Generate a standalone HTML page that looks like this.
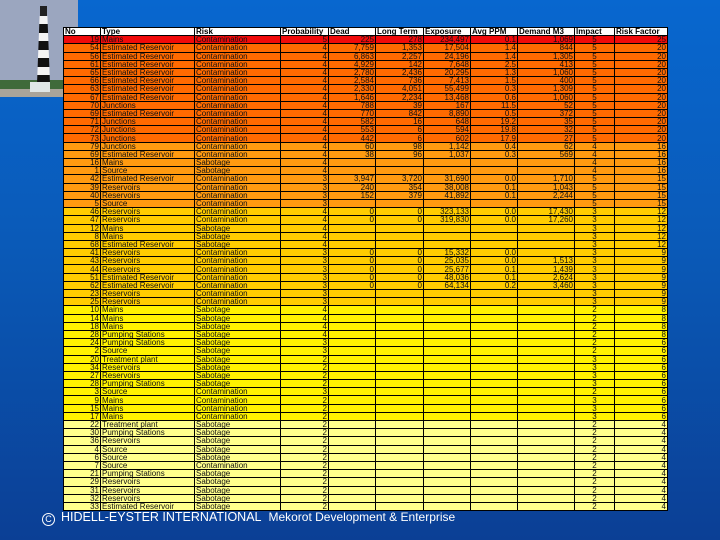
<!DOCTYPE html>
<html><head><meta charset="utf-8"><style>
html,body{margin:0;padding:0}
body{width:720px;height:540px;overflow:hidden;position:relative;background:linear-gradient(180deg,#0867cf 0%,#0a5ab8 45%,#0b3f95 100%);font-family:"Liberation Sans",sans-serif}
.sky{position:absolute;left:0;top:0;width:78px;height:97px;background:#9ba6bf}
.grass{position:absolute;left:0;top:80px;width:78px;height:9px;background:#3f6a3a}
.sand{position:absolute;left:0;top:89px;width:78px;height:8px;background:#a9a49a}
.lh{position:absolute;left:37px;top:16px;width:13px;height:68px;background:repeating-linear-gradient(180deg,#f4f4f4 0 8px,#111 8px 17px);clip-path:polygon(20% 0,80% 0,100% 100%,0 100%)}
.lhtop{position:absolute;left:40px;top:6px;width:7px;height:11px;background:#222}
.house{position:absolute;left:30px;top:82px;width:20px;height:10px;background:#dfe6e6}
table{position:absolute;left:63px;top:27px;width:604px;border-collapse:collapse;table-layout:fixed;font-size:8px;line-height:7px}
td{border:1px solid #000;padding:0 1px;height:7.2px;overflow:hidden;white-space:nowrap;color:#111}
tr.h td{background:#fff;font-weight:bold;color:#000}
tr.a td{background:#f00a0a}
tr.b td{background:#ff6a00}
tr.c td{background:#ff9a10}
tr.d td{background:#ffcc00}
tr.e td{background:#fff200}
tr.f td{background:#ffff8c}
td:nth-child(1),td:nth-child(4),td:nth-child(5),td:nth-child(6),td:nth-child(7),td:nth-child(8),td:nth-child(9),td:nth-child(10),td:nth-child(11){text-align:right}
tr.h td{text-align:left}
td:nth-child(10){text-align:center}
.foot{position:absolute;left:42px;top:510px;color:#fff;font-size:12.5px;white-space:nowrap}
.foot .c{display:inline-block;width:11px;height:11px;border:1px solid #fff;border-radius:50%;font-size:9px;text-align:center;line-height:11px;margin-right:6px;vertical-align:-1px}
</style></head><body>
<div class="sky"></div><div class="grass"></div><div class="sand"></div>
<div class="lhtop"></div><div class="lh"></div><div class="house"></div>
<table>
<colgroup><col style="width:37px"><col style="width:94px"><col style="width:86px"><col style="width:48px"><col style="width:47px"><col style="width:48px"><col style="width:47px"><col style="width:47px"><col style="width:57px"><col style="width:40px"><col style="width:53px"></colgroup>
<tr class="h"><td>No</td><td>Type</td><td>Risk</td><td>Probability</td><td>Dead</td><td>Long Term</td><td>Exposure</td><td>Avg PPM</td><td>Demand M3</td><td>Impact</td><td>Risk Factor</td></tr>
<tr class="a"><td>19</td><td>Mains</td><td>Contamination</td><td>5</td><td>225</td><td>278</td><td>234,497</td><td>0.1</td><td>1,069</td><td>5</td><td>25</td></tr>
<tr class="b"><td>54</td><td>Estimated Reservoir</td><td>Contamination</td><td>4</td><td>7,759</td><td>1,353</td><td>17,504</td><td>1.4</td><td>844</td><td>5</td><td>20</td></tr>
<tr class="b"><td>56</td><td>Estimated Reservoir</td><td>Contamination</td><td>4</td><td>6,863</td><td>2,257</td><td>24,196</td><td>1.4</td><td>1,305</td><td>5</td><td>20</td></tr>
<tr class="b"><td>61</td><td>Estimated Reservoir</td><td>Contamination</td><td>4</td><td>4,929</td><td>142</td><td>7,648</td><td>2.5</td><td>413</td><td>5</td><td>20</td></tr>
<tr class="b"><td>65</td><td>Estimated Reservoir</td><td>Contamination</td><td>4</td><td>2,780</td><td>2,436</td><td>20,295</td><td>1.3</td><td>1,060</td><td>5</td><td>20</td></tr>
<tr class="b"><td>66</td><td>Estimated Reservoir</td><td>Contamination</td><td>4</td><td>2,584</td><td>736</td><td>7,413</td><td>1.5</td><td>400</td><td>5</td><td>20</td></tr>
<tr class="b"><td>63</td><td>Estimated Reservoir</td><td>Contamination</td><td>4</td><td>2,330</td><td>4,051</td><td>55,499</td><td>0.3</td><td>1,309</td><td>5</td><td>20</td></tr>
<tr class="b"><td>67</td><td>Estimated Reservoir</td><td>Contamination</td><td>4</td><td>1,646</td><td>2,234</td><td>13,468</td><td>0.6</td><td>1,060</td><td>5</td><td>20</td></tr>
<tr class="b"><td>70</td><td>Junctions</td><td>Contamination</td><td>4</td><td>788</td><td>39</td><td>167</td><td>11.5</td><td>52</td><td>5</td><td>20</td></tr>
<tr class="b"><td>69</td><td>Estimated Reservoir</td><td>Contamination</td><td>4</td><td>770</td><td>842</td><td>8,890</td><td>0.5</td><td>372</td><td>5</td><td>20</td></tr>
<tr class="b"><td>71</td><td>Junctions</td><td>Contamination</td><td>4</td><td>582</td><td>16</td><td>648</td><td>19.2</td><td>35</td><td>5</td><td>20</td></tr>
<tr class="b"><td>72</td><td>Junctions</td><td>Contamination</td><td>4</td><td>553</td><td>6</td><td>594</td><td>19.8</td><td>32</td><td>5</td><td>20</td></tr>
<tr class="b"><td>73</td><td>Junctions</td><td>Contamination</td><td>4</td><td>442</td><td>6</td><td>602</td><td>17.9</td><td>27</td><td>5</td><td>20</td></tr>
<tr class="c"><td>79</td><td>Junctions</td><td>Contamination</td><td>4</td><td>60</td><td>98</td><td>1,142</td><td>0.4</td><td>62</td><td>4</td><td>16</td></tr>
<tr class="c"><td>69</td><td>Estimated Reservoir</td><td>Contamination</td><td>4</td><td>38</td><td>96</td><td>1,037</td><td>0.3</td><td>569</td><td>4</td><td>16</td></tr>
<tr class="c"><td>16</td><td>Mains</td><td>Sabotage</td><td>4</td><td></td><td></td><td></td><td></td><td></td><td>4</td><td>16</td></tr>
<tr class="c"><td>1</td><td>Source</td><td>Sabotage</td><td>4</td><td></td><td></td><td></td><td></td><td></td><td>4</td><td>16</td></tr>
<tr class="c"><td>42</td><td>Estimated Reservoir</td><td>Contamination</td><td>3</td><td>3,947</td><td>3,720</td><td>31,690</td><td>0.0</td><td>1,710</td><td>5</td><td>15</td></tr>
<tr class="c"><td>39</td><td>Reservoirs</td><td>Contamination</td><td>3</td><td>240</td><td>354</td><td>38,008</td><td>0.1</td><td>1,043</td><td>5</td><td>15</td></tr>
<tr class="c"><td>40</td><td>Reservoirs</td><td>Contamination</td><td>3</td><td>152</td><td>379</td><td>41,892</td><td>0.1</td><td>2,244</td><td>5</td><td>15</td></tr>
<tr class="c"><td>5</td><td>Source</td><td>Contamination</td><td>3</td><td></td><td></td><td></td><td></td><td></td><td>5</td><td>15</td></tr>
<tr class="d"><td>46</td><td>Reservoirs</td><td>Contamination</td><td>4</td><td>0</td><td>0</td><td>323,133</td><td>0.0</td><td>17,430</td><td>3</td><td>12</td></tr>
<tr class="d"><td>47</td><td>Reservoirs</td><td>Contamination</td><td>4</td><td>0</td><td>0</td><td>319,830</td><td>0.0</td><td>17,260</td><td>3</td><td>12</td></tr>
<tr class="d"><td>12</td><td>Mains</td><td>Sabotage</td><td>4</td><td></td><td></td><td></td><td></td><td></td><td>3</td><td>12</td></tr>
<tr class="d"><td>8</td><td>Mains</td><td>Sabotage</td><td>4</td><td></td><td></td><td></td><td></td><td></td><td>3</td><td>12</td></tr>
<tr class="d"><td>68</td><td>Estimated Reservoir</td><td>Sabotage</td><td>4</td><td></td><td></td><td></td><td></td><td></td><td>3</td><td>12</td></tr>
<tr class="d"><td>41</td><td>Reservoirs</td><td>Contamination</td><td>3</td><td>0</td><td>0</td><td>15,332</td><td>0.0</td><td></td><td>3</td><td>9</td></tr>
<tr class="d"><td>43</td><td>Reservoirs</td><td>Contamination</td><td>3</td><td>0</td><td>0</td><td>25,035</td><td>0.0</td><td>1,513</td><td>3</td><td>9</td></tr>
<tr class="d"><td>44</td><td>Reservoirs</td><td>Contamination</td><td>3</td><td>0</td><td>0</td><td>25,677</td><td>0.1</td><td>1,439</td><td>3</td><td>9</td></tr>
<tr class="d"><td>51</td><td>Estimated Reservoir</td><td>Contamination</td><td>3</td><td>0</td><td>0</td><td>48,036</td><td>0.1</td><td>2,624</td><td>3</td><td>9</td></tr>
<tr class="d"><td>62</td><td>Estimated Reservoir</td><td>Contamination</td><td>3</td><td>0</td><td>0</td><td>64,134</td><td>0.2</td><td>3,460</td><td>3</td><td>9</td></tr>
<tr class="d"><td>23</td><td>Reservoirs</td><td>Contamination</td><td>3</td><td></td><td></td><td></td><td></td><td></td><td>3</td><td>9</td></tr>
<tr class="d"><td>25</td><td>Reservoirs</td><td>Contamination</td><td>3</td><td></td><td></td><td></td><td></td><td></td><td>3</td><td>9</td></tr>
<tr class="e"><td>10</td><td>Mains</td><td>Sabotage</td><td>4</td><td></td><td></td><td></td><td></td><td></td><td>2</td><td>8</td></tr>
<tr class="e"><td>14</td><td>Mains</td><td>Sabotage</td><td>4</td><td></td><td></td><td></td><td></td><td></td><td>2</td><td>8</td></tr>
<tr class="e"><td>18</td><td>Mains</td><td>Sabotage</td><td>4</td><td></td><td></td><td></td><td></td><td></td><td>2</td><td>8</td></tr>
<tr class="e"><td>28</td><td>Pumping Stations</td><td>Sabotage</td><td>4</td><td></td><td></td><td></td><td></td><td></td><td>2</td><td>8</td></tr>
<tr class="e"><td>24</td><td>Pumping Stations</td><td>Sabotage</td><td>3</td><td></td><td></td><td></td><td></td><td></td><td>2</td><td>6</td></tr>
<tr class="e"><td>2</td><td>Source</td><td>Sabotage</td><td>3</td><td></td><td></td><td></td><td></td><td></td><td>2</td><td>6</td></tr>
<tr class="e"><td>20</td><td>Treatment plant</td><td>Sabotage</td><td>2</td><td></td><td></td><td></td><td></td><td></td><td>3</td><td>6</td></tr>
<tr class="e"><td>34</td><td>Reservoirs</td><td>Sabotage</td><td>2</td><td></td><td></td><td></td><td></td><td></td><td>3</td><td>6</td></tr>
<tr class="e"><td>27</td><td>Reservoirs</td><td>Sabotage</td><td>2</td><td></td><td></td><td></td><td></td><td></td><td>3</td><td>6</td></tr>
<tr class="e"><td>28</td><td>Pumping Stations</td><td>Sabotage</td><td>2</td><td></td><td></td><td></td><td></td><td></td><td>3</td><td>6</td></tr>
<tr class="e"><td>3</td><td>Source</td><td>Contamination</td><td>3</td><td></td><td></td><td></td><td></td><td></td><td>2</td><td>6</td></tr>
<tr class="e"><td>9</td><td>Mains</td><td>Contamination</td><td>2</td><td></td><td></td><td></td><td></td><td></td><td>3</td><td>6</td></tr>
<tr class="e"><td>15</td><td>Mains</td><td>Contamination</td><td>2</td><td></td><td></td><td></td><td></td><td></td><td>3</td><td>6</td></tr>
<tr class="e"><td>17</td><td>Mains</td><td>Contamination</td><td>2</td><td></td><td></td><td></td><td></td><td></td><td>3</td><td>6</td></tr>
<tr class="f"><td>22</td><td>Treatment plant</td><td>Sabotage</td><td>2</td><td></td><td></td><td></td><td></td><td></td><td>2</td><td>4</td></tr>
<tr class="f"><td>30</td><td>Pumping Stations</td><td>Sabotage</td><td>2</td><td></td><td></td><td></td><td></td><td></td><td>2</td><td>4</td></tr>
<tr class="f"><td>36</td><td>Reservoirs</td><td>Sabotage</td><td>2</td><td></td><td></td><td></td><td></td><td></td><td>2</td><td>4</td></tr>
<tr class="f"><td>4</td><td>Source</td><td>Sabotage</td><td>2</td><td></td><td></td><td></td><td></td><td></td><td>2</td><td>4</td></tr>
<tr class="f"><td>6</td><td>Source</td><td>Sabotage</td><td>2</td><td></td><td></td><td></td><td></td><td></td><td>2</td><td>4</td></tr>
<tr class="f"><td>7</td><td>Source</td><td>Contamination</td><td>2</td><td></td><td></td><td></td><td></td><td></td><td>2</td><td>4</td></tr>
<tr class="f"><td>21</td><td>Pumping Stations</td><td>Sabotage</td><td>2</td><td></td><td></td><td></td><td></td><td></td><td>2</td><td>4</td></tr>
<tr class="f"><td>29</td><td>Reservoirs</td><td>Sabotage</td><td>2</td><td></td><td></td><td></td><td></td><td></td><td>2</td><td>4</td></tr>
<tr class="f"><td>31</td><td>Reservoirs</td><td>Sabotage</td><td>2</td><td></td><td></td><td></td><td></td><td></td><td>2</td><td>4</td></tr>
<tr class="f"><td>32</td><td>Reservoirs</td><td>Sabotage</td><td>2</td><td></td><td></td><td></td><td></td><td></td><td>2</td><td>4</td></tr>
<tr class="f"><td>33</td><td>Estimated Reservoir</td><td>Sabotage</td><td>2</td><td></td><td></td><td></td><td></td><td></td><td>2</td><td>4</td></tr>
</table>
<div class="foot"><span class="c">C</span>HIDELL-EYSTER INTERNATIONAL&nbsp;&nbsp;<span style="font-size:12px">Mekorot Development &amp; Enterprise</span></div>
</body></html>
